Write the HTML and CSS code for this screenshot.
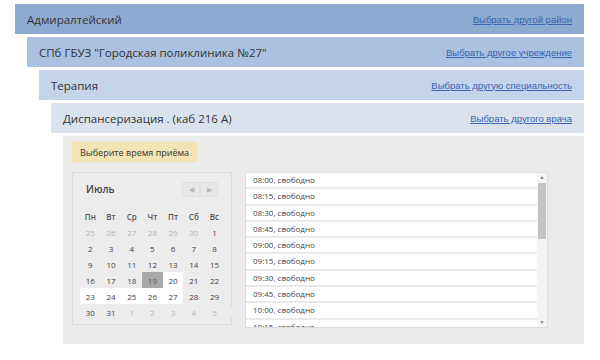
FILE: index.html
```html
<!DOCTYPE html>
<html lang="ru">
<head>
<meta charset="utf-8">
<link rel="stylesheet" href="styles.css">
</head>
<body>
<div class="page">
  <div class="bar lvl1"><span class="title">Адмиралтейский</span><a class="link" href="#">Выбрать другой район</a></div>
  <div class="bar lvl2"><span class="title">СПб ГБУЗ "Городская поликлиника №27"</span><a class="link" href="#">Выбрать другое учреждение</a></div>
  <div class="bar lvl3"><span class="title">Терапия</span><a class="link" href="#">Выбрать другую специальность</a></div>
  <div class="bar lvl4"><span class="title">Диспансеризация . (каб 216 А)</span><a class="link" href="#">Выбрать другого врача</a></div>
  <div class="panel">
    <div class="badge">Выберите время приёма</div>
    <div class="work">
      <div class="cal">
        <div class="cal-head">
          <span class="month">Июль</span>
          <div class="nav"><span class="nbtn">&#9664;</span><span class="nbtn">&#9654;</span></div>
        </div>
        <div class="grid">
          <span class="dh">Пн</span><span class="dh">Вт</span><span class="dh">Ср</span><span class="dh">Чт</span><span class="dh">Пт</span><span class="dh">Сб</span><span class="dh">Вс</span>
          <span class="d o">25</span><span class="d o">26</span><span class="d o">27</span><span class="d o">28</span><span class="d o">29</span><span class="d o">30</span><span class="d">1</span>
          <span class="d">2</span><span class="d">3</span><span class="d">4</span><span class="d">5</span><span class="d">6</span><span class="d">7</span><span class="d">8</span>
          <span class="d">9</span><span class="d">10</span><span class="d">11</span><span class="d">12</span><span class="d">13</span><span class="d">14</span><span class="d">15</span>
          <span class="d">16</span><span class="d">17</span><span class="d">18</span><span class="d sel">19</span><span class="d av">20</span><span class="d">21</span><span class="d">22</span>
          <span class="d av">23</span><span class="d av">24</span><span class="d av">25</span><span class="d av">26</span><span class="d av">27</span><span class="d">28</span><span class="d">29</span>
          <span class="d">30</span><span class="d">31</span><span class="d o">1</span><span class="d o">2</span><span class="d o">3</span><span class="d o">4</span><span class="d o">5</span>
        </div>
      </div>
      <div class="list">
        <div class="items">
          <div class="item">08:00, свободно</div>
          <div class="item">08:15, свободно</div>
          <div class="item">08:30, свободно</div>
          <div class="item">08:45, свободно</div>
          <div class="item">09:00, свободно</div>
          <div class="item">09:15, свободно</div>
          <div class="item">09:30, свободно</div>
          <div class="item">09:45, свободно</div>
          <div class="item">10:00, свободно</div>
          <div class="item">10:15, свободно</div>
        </div>
        <div class="sbar">
          <span class="sarrow">&#9650;</span>
          <div class="track"><div class="thumb"></div></div>
          <span class="sarrow">&#9660;</span>
        </div>
      </div>
    </div>
  </div>
</div>
</body>
</html>
```

FILE: styles.css
```css
* { box-sizing: border-box; }
html, body { margin: 0; background: #fff; }
.page {
  padding: 4px 16px 0 15px;
  font-family: "Open Sans", "Noto Sans", sans-serif;
  color: #333;
}
.bar {
  height: 30px;
  margin-bottom: 3px;
  display: flex;
  align-items: center;
  justify-content: space-between;
  padding: 0 12px 0 12px;
}
.title { font-size: 11.5px; }
.link {
  font-family: "Liberation Sans", Arial, sans-serif;
  font-size: 9.5px;
  color: #3a64b0;
  text-decoration: underline;
}
.lvl1 { background: #8daad0; }
.lvl2 { background: #aac1e0; margin-left: 12px; }
.lvl3 { background: #c4d4ea; margin-left: 24px; }
.lvl4 { background: #dae2ed; margin-left: 36px; }
.panel {
  margin-left: 48px;
  height: 208px;
  background: #ebebeb;
  padding: 6px 0 0 9px;
}
.badge {
  display: flex;
  align-items: center;
  width: 125px;
  height: 20px;
  background: #f3e4b3;
  font-size: 9px;
  padding-left: 8px;
  color: #333;
}
.work {
  display: flex;
  gap: 13px;
  margin-top: 10px;
  align-items: flex-start;
}
.cal {
  position: relative;
  width: 160px;
  height: 153px;
  border: 1px solid #dcdcdc;
  background: #ececec;
  padding: 7px 7px 0 7px;
}
.cal::after {
  content: "";
  position: absolute;
  right: -5px;
  top: 134px;
  border-left: 5px solid #ececec;
  border-top: 5px solid transparent;
  border-bottom: 5px solid transparent;
}
.cal-head {
  display: flex;
  justify-content: space-between;
  align-items: center;
  height: 18px;
  padding-left: 6px;
  padding-right: 6px;
}
.month { font-size: 10px; font-weight: 600; color: #444; }
.nav { display: flex; }
.nbtn {
  width: 18px;
  height: 15px;
  border: 1px solid #e0e0e0;
  background: #e8e8e8;
  color: #b8b8b8;
  font-size: 7px;
  display: flex;
  align-items: center;
  justify-content: center;
}
.grid {
  margin-top: 10px;
  display: grid;
  grid-template-columns: repeat(7, 20.7px);
  grid-auto-rows: 16px;
  font-size: 8px;
}
.dh, .d {
  display: flex;
  align-items: center;
  justify-content: center;
  color: #444;
}
.dh { font-weight: 600; color: #555; }
.d.o { color: #b5b5b5; }
.d.sel { background: #a9a9a9; color: #555; }
.d.av { background: #fff; }
.list {
  width: 303px;
  height: 156px;
  border: 1px solid #dcdcdc;
  background: #fff;
  display: flex;
  overflow: hidden;
}
.items { flex: 1; background: #e9e9e9; }
.item {
  height: 14.3px;
  margin-bottom: 2px;
  background: #fff;
  font-size: 8px;
  line-height: 14.3px;
  padding-left: 7px;
  color: #444;
}
.sbar {
  width: 10px;
  background: #f4f4f4;
  display: flex;
  flex-direction: column;
  align-items: center;
}
.sarrow { font-size: 5px; color: #777; height: 9px; line-height: 9px; }
.track { flex: 1; width: 100%; padding: 1px 1px; }
.thumb { height: 56px; background: #c3c3c3; }
```
